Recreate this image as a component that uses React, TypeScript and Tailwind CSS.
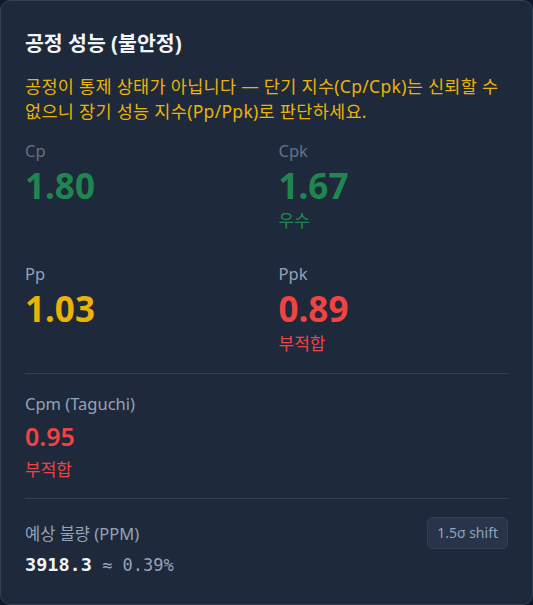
import React from "react";

const sans = { fontFamily: '"Noto Sans", "Noto Sans CJK KR", sans-serif' };
const mono = { fontFamily: '"DejaVu Sans Mono", monospace' };

function Metric({ label, value, color, status, dim }: { label: string; value: string; color: string; status?: string; dim?: boolean }) {
  return (
    <div className={`flex flex-col ${dim ? "opacity-60" : ""}`}>
      <div className="text-[16.5px] leading-[24px] text-[#94a3b8]">{label}</div>
      <div className={`mt-[2px] text-[35px] leading-[42px] font-bold ${color}`}>{value}</div>
      {status && <div className={`mt-[1px] text-[17px] leading-[26px] ${color}`}>{status}</div>}
    </div>
  );
}

export default function App() {
  return (
    <div className="min-h-screen bg-[#0f172a]" style={sans}>
      <div className="h-[605px] rounded-[10px] border border-[#334155] bg-[#1e293b] px-6 pt-6 pb-6">
        <h2 className="text-[20.5px] leading-[36px] font-bold text-[#f1f5f9]">공정 성능 (불안정)</h2>
        <p className="mt-[13px] text-[17.5px] leading-[25px] tracking-[0.3px] text-[#eab308]">
          공정이 통제 상태가 아닙니다 — 단기 지수(Cp/Cpk)는 신뢰할 수 없으니 장기 성능 지수(Pp/Ppk)로 판단하세요.
        </p>
        <div className="mt-[15px] grid grid-cols-2 gap-x-6 gap-y-[28px]">
          <Metric label="Cp" value="1.80" color="text-[#22c55e]" dim />
          <Metric label="Cpk" value="1.67" color="text-[#22c55e]" status="우수" dim />
          <Metric label="Pp" value="1.03" color="text-[#eab308]" />
          <Metric label="Ppk" value="0.89" color="text-[#ef4444]" status="부적합" />
        </div>
        <div className="mt-[16px] border-t border-[#334155] pt-[18px]">
          <div className="text-[16.5px] leading-[24px] text-[#94a3b8]">Cpm (Taguchi)</div>
          <div className="mt-[3px] text-[25px] leading-[34px] font-semibold text-[#ef4444]">0.95</div>
          <div className="mt-[4px] text-[17px] leading-[26px] text-[#ef4444]">부적합</div>
        </div>
        <div className="mt-[15px] border-t border-[#334155] pt-[18px] flex items-start justify-between">
          <div>
            <div className="mt-[4px] text-[16.5px] leading-[26px] text-[#94a3b8]">예상 불량 (PPM)</div>
            <div className="mt-[5px] leading-[26px]" style={mono}>
              <span className="text-[18.5px] font-bold text-[#f1f5f9]">3918.3</span>
              <span className="text-[17px] text-[#94a3b8]"> ≈ 0.39%</span>
            </div>
          </div>
          <div className="rounded-[6px] border border-[#334155] bg-[#273449] px-[9px] py-[5px] text-[14px] leading-[20px] text-[#94a3b8]">
            1.5σ shift
          </div>
        </div>
      </div>
    </div>
  );
}
